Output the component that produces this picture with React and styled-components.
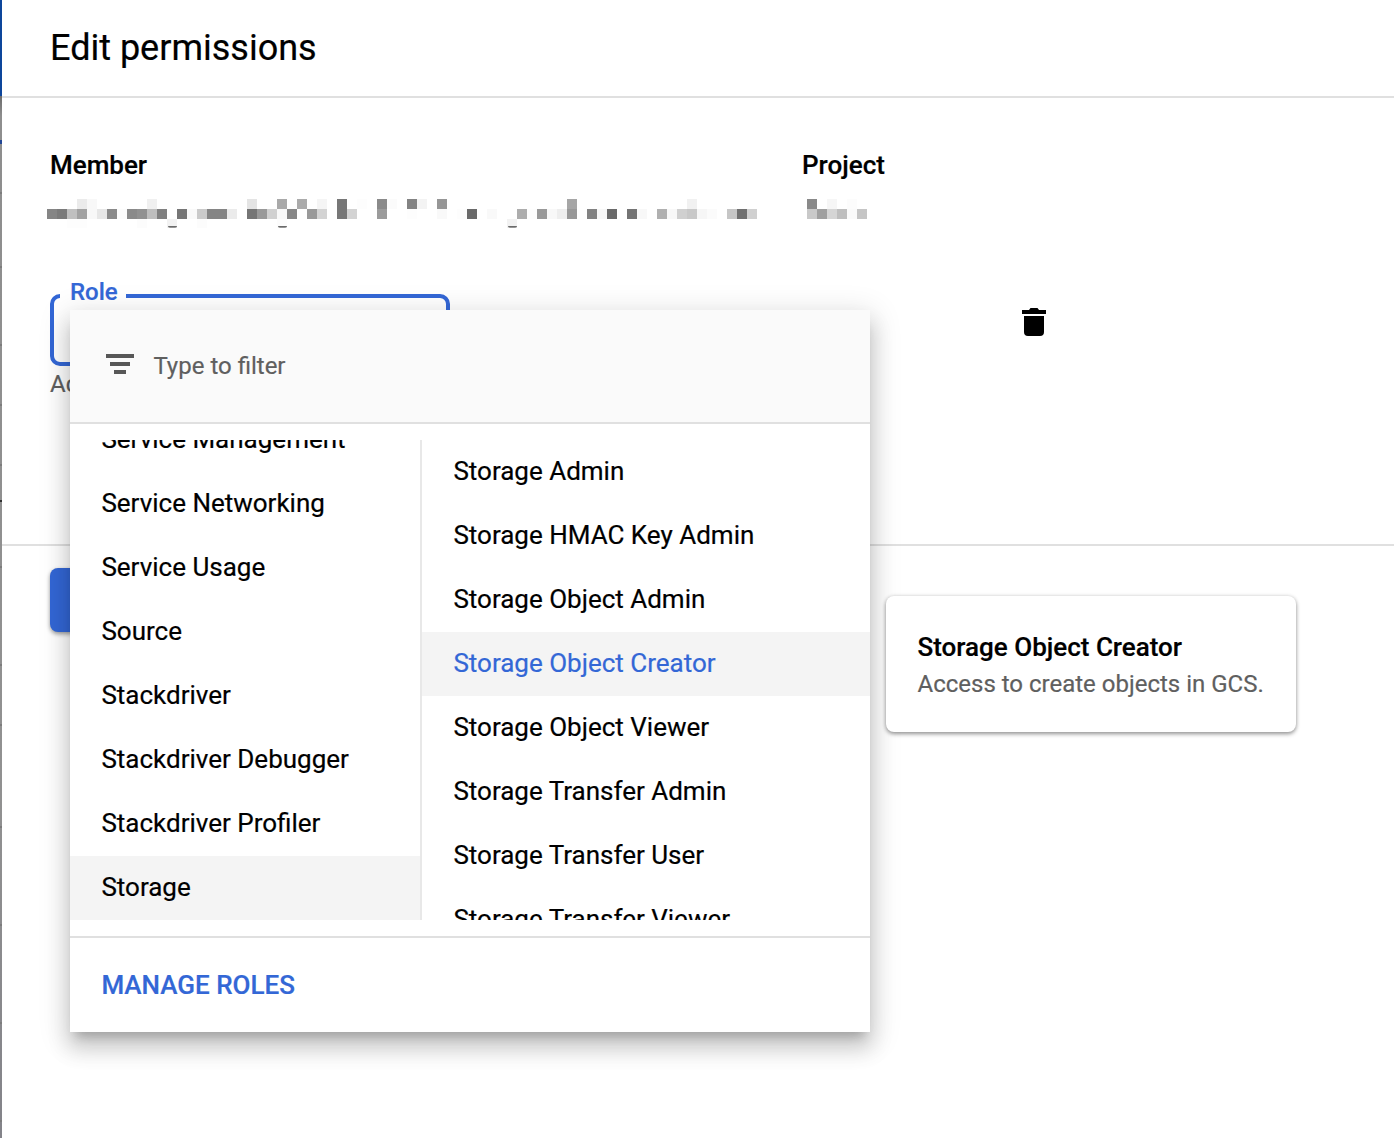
import React from "react";
import styled, { createGlobalStyle } from "styled-components";

const GlobalStyle = createGlobalStyle`
  * { box-sizing: border-box; }
  body {
    margin: 0;
    background: #fff;
    color: #000;
    font-family: Roboto, "Liberation Sans", sans-serif;
    -webkit-text-stroke: 0.2px currentColor;
    overflow: hidden;
  }
`;

const Page = styled.div`
  display: flex;
  width: 1394px;
  height: 1138px;
  overflow: hidden;
`;

const Rail = styled.div`
  width: 2px;
  flex: none;
  display: flex;
  flex-direction: column;
  background: linear-gradient(#6c6c6c, #6c6c6c 96px, #8e8e8e 116px, #919191 800px, #838389);
`;

const RailPart = styled.div`
  height: ${(p) => p.$h}px;
  flex: none;
  background: ${(p) => p.$color || "transparent"};
`;

const Panel = styled.main`
  flex: 1;
  display: flex;
  flex-direction: column;
`;

const Header = styled.header`
  height: 98px;
  padding: 0 48px;
  border-bottom: 2px solid #e0e0e0;
`;

const Title = styled.h1`
  margin: 0;
  font-size: 36px;
  font-weight: 400;
  line-height: 96px;
`;

const Body = styled.section`
  height: 448px;
  padding: 48px 48px 0;
  border-bottom: 2px solid #e0e0e0;
`;

const Identity = styled.div`
  display: grid;
  grid-template-columns: 752px 1fr;
`;

const FieldName = styled.div`
  font-size: 26px;
  font-weight: 500;
  line-height: 38px;
`;

const Mosaic = styled.div`
  display: grid;
  grid-template-columns: repeat(${(p) => p.$cols}, 10px);
  grid-template-rows: 10px 10px 9px;
  margin: 15px 0 0 ${(p) => p.$shift}px;
`;

const Cell = styled.i`
  grid-column: ${(p) => p.$col + 1};
  grid-row: ${(p) => p.$row + 1};
  display: flex;
  align-items: flex-end;
  justify-content: center;
`;

const Descender = styled.span`
  width: 9px;
  height: 2px;
  border-radius: 0 0 4px 4px;
  background: linear-gradient(#555, #aaa);
`;

const RoleRow = styled.div`
  display: flex;
  justify-content: space-between;
  align-items: flex-start;
  width: 996px;
  margin-top: 66px;
`;

const RoleField = styled.div`
  width: 400px;
`;

const SelectBox = styled.div`
  position: relative;
  height: 72px;
  border: 4px solid #3367d6;
  border-radius: 10px;
`;

const FloatingLabel = styled.label`
  position: absolute;
  left: 6px;
  top: -20px;
  width: 66px;
  padding-left: 10px;
  background: #fff;
  color: #3367d6;
  font-size: 24px;
  font-weight: 500;
  line-height: 28px;
  height: 32px;
`;

const Hint = styled.div`
  margin-top: 4px;
  color: #5f5f5f;
  font-size: 24px;
  line-height: 28px;
`;

const DeleteButton = styled.button`
  width: 24px;
  height: 28px;
  margin-top: 14px;
  padding: 0;
  border: 0;
  background: none;
  svg { display: block; }
`;

const Actions = styled.div`
  padding: 22px 48px;
`;

const SaveButton = styled.button`
  display: block;
  width: 120px;
  height: 64px;
  border: 0;
  border-radius: 8px;
  background: #3367d6;
  box-shadow: 0 2px 4px rgba(0, 0, 0, 0.4);
`;

const Menu = styled.div`
  position: absolute;
  left: 70px;
  top: 310px;
  width: 800px;
  height: 722px;
  display: flex;
  flex-direction: column;
  background: #fff;
  box-shadow:
    0 10px 10px -6px rgba(0, 0, 0, 0.2),
    0 16px 20px 2px rgba(0, 0, 0, 0.14),
    0 6px 28px 4px rgba(0, 0, 0, 0.12);
`;

const Filter = styled.div`
  display: flex;
  align-items: center;
  height: 114px;
  padding: 0 36px;
  gap: 19.4px;
  background: #fafafa;
  border-bottom: 2px solid #e0e0e0;
  color: #5f5f5f;
  font-size: 24px;
  line-height: 28px;
  svg { display: block; margin-top: -4px; }
`;

const Columns = styled.div`
  display: grid;
  grid-template-columns: 352px 448px;
  height: 480px;
  margin: 16px 0;
`;

const List = styled.ul`
  height: 480px;
  margin: 0;
  padding: 0;
  list-style: none;
  overflow: hidden;
  border-right: ${(p) => (p.$divided ? "2px solid #e8e8e8" : "0")};
`;

const Item = styled.li`
  height: 64px;
  margin-top: ${(p) => p.$offset || 0}px;
  padding: 0 31.4px;
  font-size: 26px;
  line-height: 62px;
  white-space: nowrap;
  color: ${(p) => (p.$accent ? "#3367d6" : "#000")};
  background: ${(p) => (p.$active ? "#f4f4f4" : "transparent")};
`;

const Footer = styled.div`
  display: flex;
  align-items: center;
  height: 96px;
  padding: 0 31.4px;
  border-top: 2px solid #e0e0e0;
  color: #3367d6;
  font-size: 26px;
  font-weight: 500;
`;

const Tooltip = styled.aside`
  position: absolute;
  left: 886px;
  top: 596px;
  width: 410px;
  height: 136px;
  padding: 32px 31.5px 0;
  border-radius: 8px;
  background: #fff;
  box-shadow: 0 2px 4px rgba(0, 0, 0, 0.4), 0 0 4px rgba(0, 0, 0, 0.1);
  white-space: nowrap;
`;

const TipTitle = styled.div`
  font-size: 26px;
  font-weight: 500;
  line-height: 38px;
`;

const TipText = styled.div`
  color: #5f5f5f;
  font-size: 24px;
  line-height: 36px;
`;

const railParts = [
  [96, "#0d469b"], [44], [4, "#234795"], [48], [2, "#7c7c7c"], [72], [2, "#7c7c7c"],
  [76], [2, "#7c7c7c"], [58], [2, "#7c7c7c"], [58], [2, "#7c7c7c"], [34],
  [2, "#303030"], [64], [2, "#7c7c7c"], [96], [2, "#7c7c7c"], [58], [2, "#7c7c7c"],
  [100], [2, "#7c7c7c"], [96], [2, "#7c7c7c"], [96], [2, "#7c7c7c"], [96], [2, "#7c7c7c"],
];

// [column, row, grey level, has descender]
const memberCells = [
  [3, 0, 235], [4, 0, 248], [10, 0, 240], [20, 0, 228], [23, 0, 169], [25, 0, 171],
  [27, 0, 245], [29, 0, 119], [31, 0, 253], [33, 0, 138], [34, 0, 251], [36, 0, 131],
  [37, 0, 243], [39, 0, 150], [52, 0, 166], [64, 0, 241],
  [0, 1, 133], [1, 1, 123], [2, 1, 192], [3, 1, 162], [4, 1, 248], [5, 1, 231],
  [6, 1, 138], [7, 1, 251], [8, 1, 138], [9, 1, 145], [10, 1, 190], [11, 1, 128],
  [13, 1, 118], [14, 1, 249], [15, 1, 202], [16, 1, 133], [17, 1, 133], [18, 1, 235],
  [20, 1, 117], [21, 1, 153], [22, 1, 208], [23, 1, 248], [24, 1, 135], [26, 1, 153],
  [27, 1, 211], [29, 1, 119], [30, 1, 211], [33, 1, 155], [36, 1, 253], [39, 1, 249],
  [41, 1, 253], [42, 1, 106], [44, 1, 249], [47, 1, 173], [48, 1, 253], [49, 1, 153],
  [50, 1, 248], [51, 1, 238], [52, 1, 152], [54, 1, 130], [55, 1, 247], [56, 1, 106],
  [58, 1, 116], [59, 1, 248], [61, 1, 176], [62, 1, 248], [63, 1, 208], [64, 1, 200],
  [65, 1, 246], [66, 1, 251], [68, 1, 198], [69, 1, 112], [70, 1, 208],
  [2, 2, 253], [3, 2, 253], [9, 2, 252], [12, 2, 242, true], [15, 2, 252],
  [23, 2, 252, true], [46, 2, 242, true],
];

const projectCells = [
  [0, 0, 137], [2, 0, 246], [4, 0, 252],
  [0, 1, 201], [1, 1, 160], [2, 1, 213], [3, 1, 190], [4, 1, 250], [5, 1, 197],
];

const services = [
  "Service Management", "Service Networking", "Service Usage", "Source",
  "Stackdriver", "Stackdriver Debugger", "Stackdriver Profiler", "Storage",
];

const roles = [
  "Storage Admin", "Storage HMAC Key Admin", "Storage Object Admin",
  "Storage Object Creator", "Storage Object Viewer", "Storage Transfer Admin",
  "Storage Transfer User", "Storage Transfer Viewer",
];

function Redacted({ cells, cols, shift }) {
  return (
    <Mosaic $cols={cols} $shift={shift}>
      {cells.map(([c, r, g, tail]) => (
        <Cell key={`${c}-${r}`} $col={c} $row={r} style={{ background: `rgb(${g},${g},${g})` }}>
          {tail && <Descender />}
        </Cell>
      ))}
    </Mosaic>
  );
}

export default function App() {
  return (
    <>
      <GlobalStyle />
      <Page>
        <Rail>
          {railParts.map(([h, color], i) => (
            <RailPart key={i} $h={h} $color={color} />
          ))}
        </Rail>
        <Panel>
          <Header>
            <Title>Edit permissions</Title>
          </Header>
          <Body>
            <Identity>
              <div>
                <FieldName>Member</FieldName>
                <Redacted cells={memberCells} cols={71} shift={-3} />
              </div>
              <div>
                <FieldName>Project</FieldName>
                <Redacted cells={projectCells} cols={6} shift={5} />
              </div>
            </Identity>
            <RoleRow>
              <RoleField>
                <SelectBox>
                  <FloatingLabel>Role</FloatingLabel>
                </SelectBox>
                <Hint>Access</Hint>
              </RoleField>
              <DeleteButton aria-label="Delete role">
                <svg width="24" height="28" viewBox="0 0 24 28">
                  <path d="M0 2h7l1.5-2h7L17 2h7v4H0zM2 8h20v16a4 4 0 0 1-4 4H6a4 4 0 0 1-4-4z" />
                </svg>
              </DeleteButton>
            </RoleRow>
          </Body>
          <Actions>
            <SaveButton aria-label="Save" />
          </Actions>
        </Panel>
      </Page>
      <Menu>
        <Filter>
          <svg width="28" height="20" viewBox="0 0 28 20" fill="#575757">
            <path d="M0 0h28v4H0zM4 8h20v4H4zM8 16h12v4H8z" />
          </svg>
          <span>Type to filter</span>
        </Filter>
        <Columns>
          <List $divided>
            {services.map((s, i) => (
              <Item key={s} $offset={i === 0 ? -32 : 0} $active={s === "Storage"}>{s}</Item>
            ))}
          </List>
          <List>
            {roles.map((r) => {
              const on = r === "Storage Object Creator";
              return <Item key={r} $active={on} $accent={on}>{r}</Item>;
            })}
          </List>
        </Columns>
        <Footer>MANAGE ROLES</Footer>
      </Menu>
      <Tooltip>
        <TipTitle>Storage Object Creator</TipTitle>
        <TipText>Access to create objects in GCS.</TipText>
      </Tooltip>
    </>
  );
}
